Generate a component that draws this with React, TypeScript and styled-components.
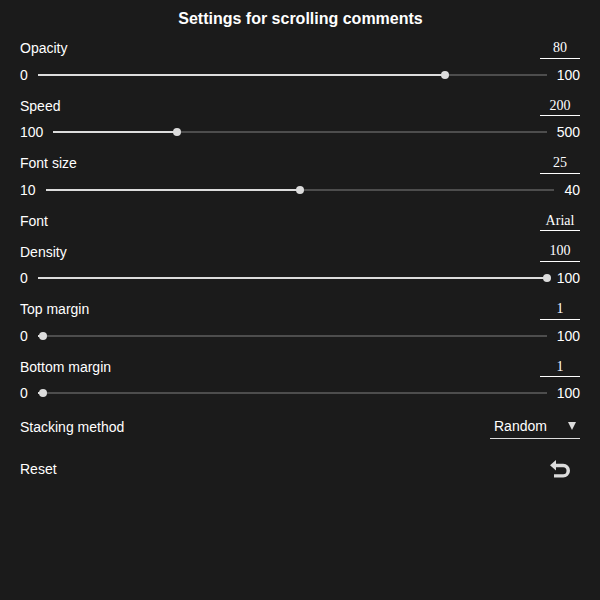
import React from "react";
import styled, { createGlobalStyle } from "styled-components";

const GlobalStyle = createGlobalStyle`
  * { box-sizing: border-box; }
  body { margin: 0; background: #1b1b1b; }
`;

const Panel = styled.main`
  width: 600px;
  height: 600px;
  padding: 9px 20px 0;
  background: #1b1b1b;
  color: #fff;
  font: 14px/18px "Liberation Sans", Arial, sans-serif;
  overflow: hidden;
`;

const Title = styled.h1`
  margin: 0 0 8.9px;
  padding-left: 1px;
  font-size: 16px;
  line-height: 19px;
  font-weight: bold;
  text-align: center;
`;

const Setting = styled.section<{ $gap: number }>`
  padding-bottom: ${(p) => p.$gap}px;
`;

const Header = styled.div`
  display: flex;
  justify-content: space-between;
  height: 22px;
  line-height: 22px;
`;

const Label = styled.span`
  padding-top: 0.3px;
`;

const ValueInput = styled.input`
  width: 40px;
  height: 22px;
  padding: 1.3px 0 0;
  border: 0;
  border-bottom: 1px solid #fff;
  outline: 0;
  background: transparent;
  color: #fff;
  font: 14px "Liberation Serif", "Times New Roman", serif;
  text-align: center;
`;

const SliderRow = styled.div`
  display: flex;
  align-items: center;
  gap: 10px;
  height: 32px;
`;

const Track = styled.div`
  display: flex;
  align-items: center;
  flex: 1;
  height: 2px;
  background: #4d4d4d;
`;

const Fill = styled.div`
  height: 2px;
  background: #dcdcdc;
`;

const Thumb = styled.div`
  flex: none;
  width: 8px;
  height: 8px;
  margin: 0 -4px;
  border-radius: 50%;
  background: #dcdcdc;
`;

const ActionRow = styled.div<{ $height: number }>`
  display: flex;
  align-items: center;
  justify-content: space-between;
  height: ${(p) => p.$height}px;
`;

const SelectLabel = styled.span`
  padding-top: 1.4px;
`;

const Select = styled.div`
  display: flex;
  align-items: center;
  justify-content: space-between;
  width: 90px;
  height: 26px;
  padding: 2px 4px 0;
  border-bottom: 1px solid #dcdcdc;
`;

const ResetButton = styled.button`
  display: flex;
  width: 20px;
  height: 20px;
  margin-right: 10px;
  padding: 0;
  border: 0;
  background: transparent;
`;

type Item = { label: string; value: string; min?: number; max?: number; gap?: number };

const items: Item[] = [
  { label: "Opacity", value: "80", min: 0, max: 100 },
  { label: "Speed", value: "200", min: 100, max: 500 },
  { label: "Font size", value: "25", min: 10, max: 40 },
  { label: "Font", value: "Arial", gap: 8.85 },
  { label: "Density", value: "100", min: 0, max: 100, gap: 3.65 },
  { label: "Top margin", value: "1", min: 0, max: 100 },
  { label: "Bottom margin", value: "1", min: 0, max: 100 },
];

function SettingItem({ label, value, min, max, gap = 3.5 }: Item) {
  const ranged = min !== undefined && max !== undefined;
  return (
    <Setting $gap={gap}>
      <Header>
        <Label>{label}</Label>
        <ValueInput defaultValue={value} aria-label={label} />
      </Header>
      {ranged && (
        <SliderRow>
          <span>{min}</span>
          <Track>
            <Fill style={{ width: `${((Number(value) - min) / (max - min)) * 100}%` }} />
            <Thumb />
          </Track>
          <span>{max}</span>
        </SliderRow>
      )}
    </Setting>
  );
}

export default function App() {
  return (
    <>
      <GlobalStyle />
      <Panel>
        <Title>Settings for scrolling comments</Title>
        {items.map((item) => (
          <SettingItem key={item.label} {...item} />
        ))}
        <ActionRow $height={26}>
          <SelectLabel>Stacking method</SelectLabel>
          <Select>
            <span>Random</span>
            <svg width="8" height="8" viewBox="0 0 8 8">
              <path d="M0 0h8L4 8z" fill="#dcdcdc" />
            </svg>
          </Select>
        </ActionRow>
        <ActionRow $height={60}>
          <span>Reset</span>
          <ResetButton aria-label="Reset">
            <svg width="20" height="20" viewBox="0 0 20 20">
              <path d="M0 6.3L6 1V4.8H13.2A6.8 6.9 0 0 1 13.2 18.6H4V15.2H13.2A3.3 3.5 0 0 0 13.2 8.2H6V11.6Z" fill="#dcdcdc" />
            </svg>
          </ResetButton>
        </ActionRow>
      </Panel>
    </>
  );
}
